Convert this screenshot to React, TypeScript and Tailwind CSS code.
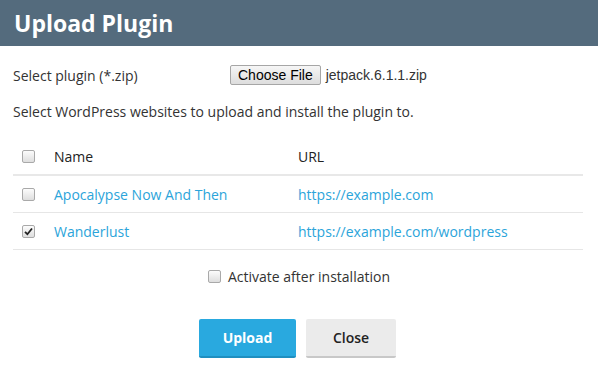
import { useState } from 'react';

const sites = [
  { id: 1, name: 'Apocalypse Now And Then', url: 'https://example.com', checked: false },
  { id: 2, name: 'Wanderlust', url: 'https://example.com/wordpress', checked: true },
];

const Box = ({ checked, onChange }: { checked: boolean; onChange?: () => void }) => (
  <span
    onClick={onChange}
    className="w-[13px] h-[13px] rounded-[2px] border border-[#a9a9a9] bg-gradient-to-b from-[#fcfcfc] to-[#dedede] flex items-center justify-center shrink-0"
  >
    {checked && (
      <svg width="9" height="9" viewBox="0 0 9 9">
        <path d="M1 4.8 L3.4 7.2 L8 1.5" stroke="#222" strokeWidth="1.8" fill="none" />
      </svg>
    )}
  </span>
);

export default function App() {
  const [rows, setRows] = useState(sites);
  const [activate, setActivate] = useState(false);

  return (
    <div className="w-[598px] h-[371px] bg-white text-[#333] text-[14px] font-['Open_Sans',sans-serif] overflow-hidden">
      <div className="h-[46px] bg-[#546b7d] flex items-center px-[14px]">
        <h1 className="text-white text-[23px] font-bold leading-none">Upload Plugin</h1>
      </div>

      <div className="px-[13px]">
        <div className="flex items-center h-[20px] mt-[19px]">
          <span className="w-[217px]">Select plugin (*.zip)</span>
          <span className="h-[20px] px-[7px] flex items-center border border-[#a6a6a6] rounded-[2px] bg-gradient-to-b from-[#f6f6f6] to-[#dddddd] text-[14px] text-black font-['Liberation_Sans',Arial,sans-serif]">
            Choose File
          </span>
          <span className="ml-[5px] text-[14px] font-['Liberation_Sans',Arial,sans-serif] text-[#333]">jetpack.6.1.1.zip</span>
        </div>

        <p className="mt-[17px] leading-[20px]">Select WordPress websites to upload and install the plugin to.</p>

        <div className="mt-[17px] w-[570px]">
          <div className="flex items-center h-[37px] border-b-2 border-[#e8e8e8]">
            <span className="w-[41px] pl-[9px]"><Box checked={false} /></span>
            <span className="w-[244px] text-[#222]">Name</span>
            <span className="text-[#222]">URL</span>
          </div>
          {rows.map(r => (
            <div key={r.id} className="flex items-center h-[37px] border-b border-[#e6e6e6]">
              <span className="w-[41px] pl-[9px]">
                <Box
                  checked={r.checked}
                  onChange={() => setRows(rows.map(x => (x.id === r.id ? { ...x, checked: !x.checked } : x)))}
                />
              </span>
              <a className="w-[244px] text-[#2ba4da]">{r.name}</a>
              <a className="text-[#2ba4da]">{r.url}</a>
            </div>
          ))}
        </div>

        <div className="flex justify-center items-center gap-[7px] mt-[16px] h-[20px]">
          <Box checked={activate} onChange={() => setActivate(!activate)} />
          <span>Activate after installation</span>
        </div>

        <div className="flex justify-center gap-[10px] mt-[33px] pr-[3px]">
          <button className="w-[97px] h-[39px] bg-[#29a9df] border-b-2 border-[#1f8fc0] rounded-[2px] text-white font-bold">
            Upload
          </button>
          <button className="w-[90px] h-[39px] bg-[#ebebeb] border-b-2 border-[#c8c8c8] rounded-[2px] text-[#222] font-semibold">
            Close
          </button>
        </div>
      </div>
    </div>
  );
}
